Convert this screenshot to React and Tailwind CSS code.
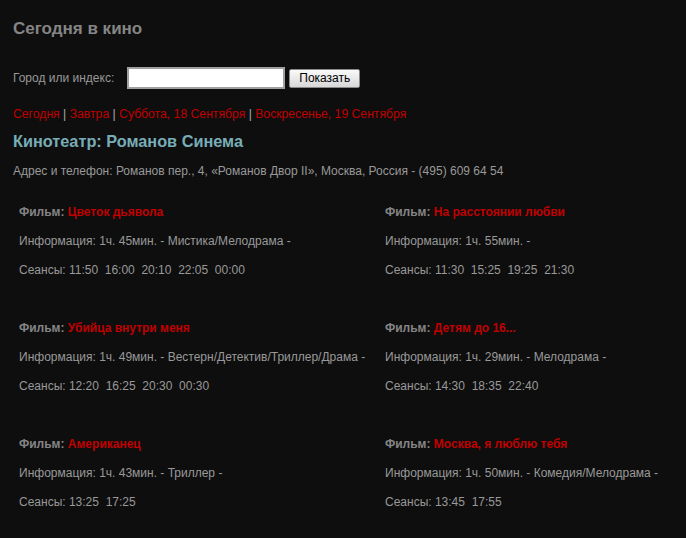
import React from 'react';

const dates = ['Сегодня', 'Завтра', 'Суббота, 18 Сентября', 'Воскресенье, 19 Сентября'];

const films = [
  { title: 'Цветок дьявола', info: '1ч. 45мин. - Мистика/Мелодрама -', times: ['11:50', '16:00', '20:10', '22:05', '00:00'] },
  { title: 'На расстоянии любви', info: '1ч. 55мин. -', times: ['11:30', '15:25', '19:25', '21:30'] },
  { title: 'Убийца внутри меня', info: '1ч. 49мин. - Вестерн/Детектив/Триллер/Драма -', times: ['12:20', '16:25', '20:30', '00:30'] },
  { title: 'Детям до 16...', info: '1ч. 29мин. - Мелодрама -', times: ['14:30', '18:35', '22:40'] },
  { title: 'Американец', info: '1ч. 43мин. - Триллер -', times: ['13:25', '17:25'] },
  { title: 'Москва, я люблю тебя', info: '1ч. 50мин. - Комедия/Мелодрама -', times: ['13:45', '17:55'] },
];

const FilmCard = ({ film }) => (
  <div className="whitespace-nowrap pb-[29px] text-[12px] leading-[29px]">
    <div>
      <span className="font-bold text-[#858585]">Фильм: </span>
      <a href="#" className="font-bold text-[#c00000]">{film.title}</a>
    </div>
    <div>Информация: {film.info}</div>
    <div className="whitespace-pre">Сеансы: {film.times.join('  ')}</div>
  </div>
);

const App = () => {
  return (
    <div
      className="min-h-[538px] bg-[#0e0e0e] px-[13px] pt-[19px] text-[#999999]"
      style={{ fontFamily: '"Liberation Sans", Arial, sans-serif' }}
    >
      <h1 className="text-[17px] font-bold leading-[20px] text-[#858585]">Сегодня в кино</h1>

      <div className="mt-[28px] flex items-center text-[12px]">
        <span>Город или индекс:</span>
        <input
          type="text"
          className="ml-[13px] h-[22px] w-[158px] border-2 border-[#a0a0a0] bg-white outline-none"
        />
        <button className="ml-[4px] h-[19px] w-[71px] rounded-[2px] border border-[#8a8a8a] bg-gradient-to-b from-[#fafafa] to-[#d8d8d8] text-[12px] leading-[17px] text-black">
          Показать
        </button>
      </div>

      <div className="mt-[18px] whitespace-pre text-[12.2px] leading-[14px]">
        {dates.map((d, i) => (
          <React.Fragment key={d}>
            {i > 0 && <span className="text-[#aaaaaa]">{' | '}</span>}
            <a href="#" className="text-[#c00000]">{d}</a>
          </React.Fragment>
        ))}
      </div>

      <h2 className="mt-[10px] text-[16.3px] font-bold leading-[20px] text-[#78adb8]">Кинотеатр: Романов Синема</h2>

      <p className="mt-[13px] text-[12px] leading-[14px]">
        Адрес и телефон: Романов пер., 4, «Романов Двор II», Москва, Россия - (495) 609 64 54
      </p>

      <div className="mt-[20px] grid grid-cols-[366px_1fr] px-[6px]">
        {films.map((f) => (
          <FilmCard key={f.title} film={f} />
        ))}
      </div>
    </div>
  );
};

export default App;
